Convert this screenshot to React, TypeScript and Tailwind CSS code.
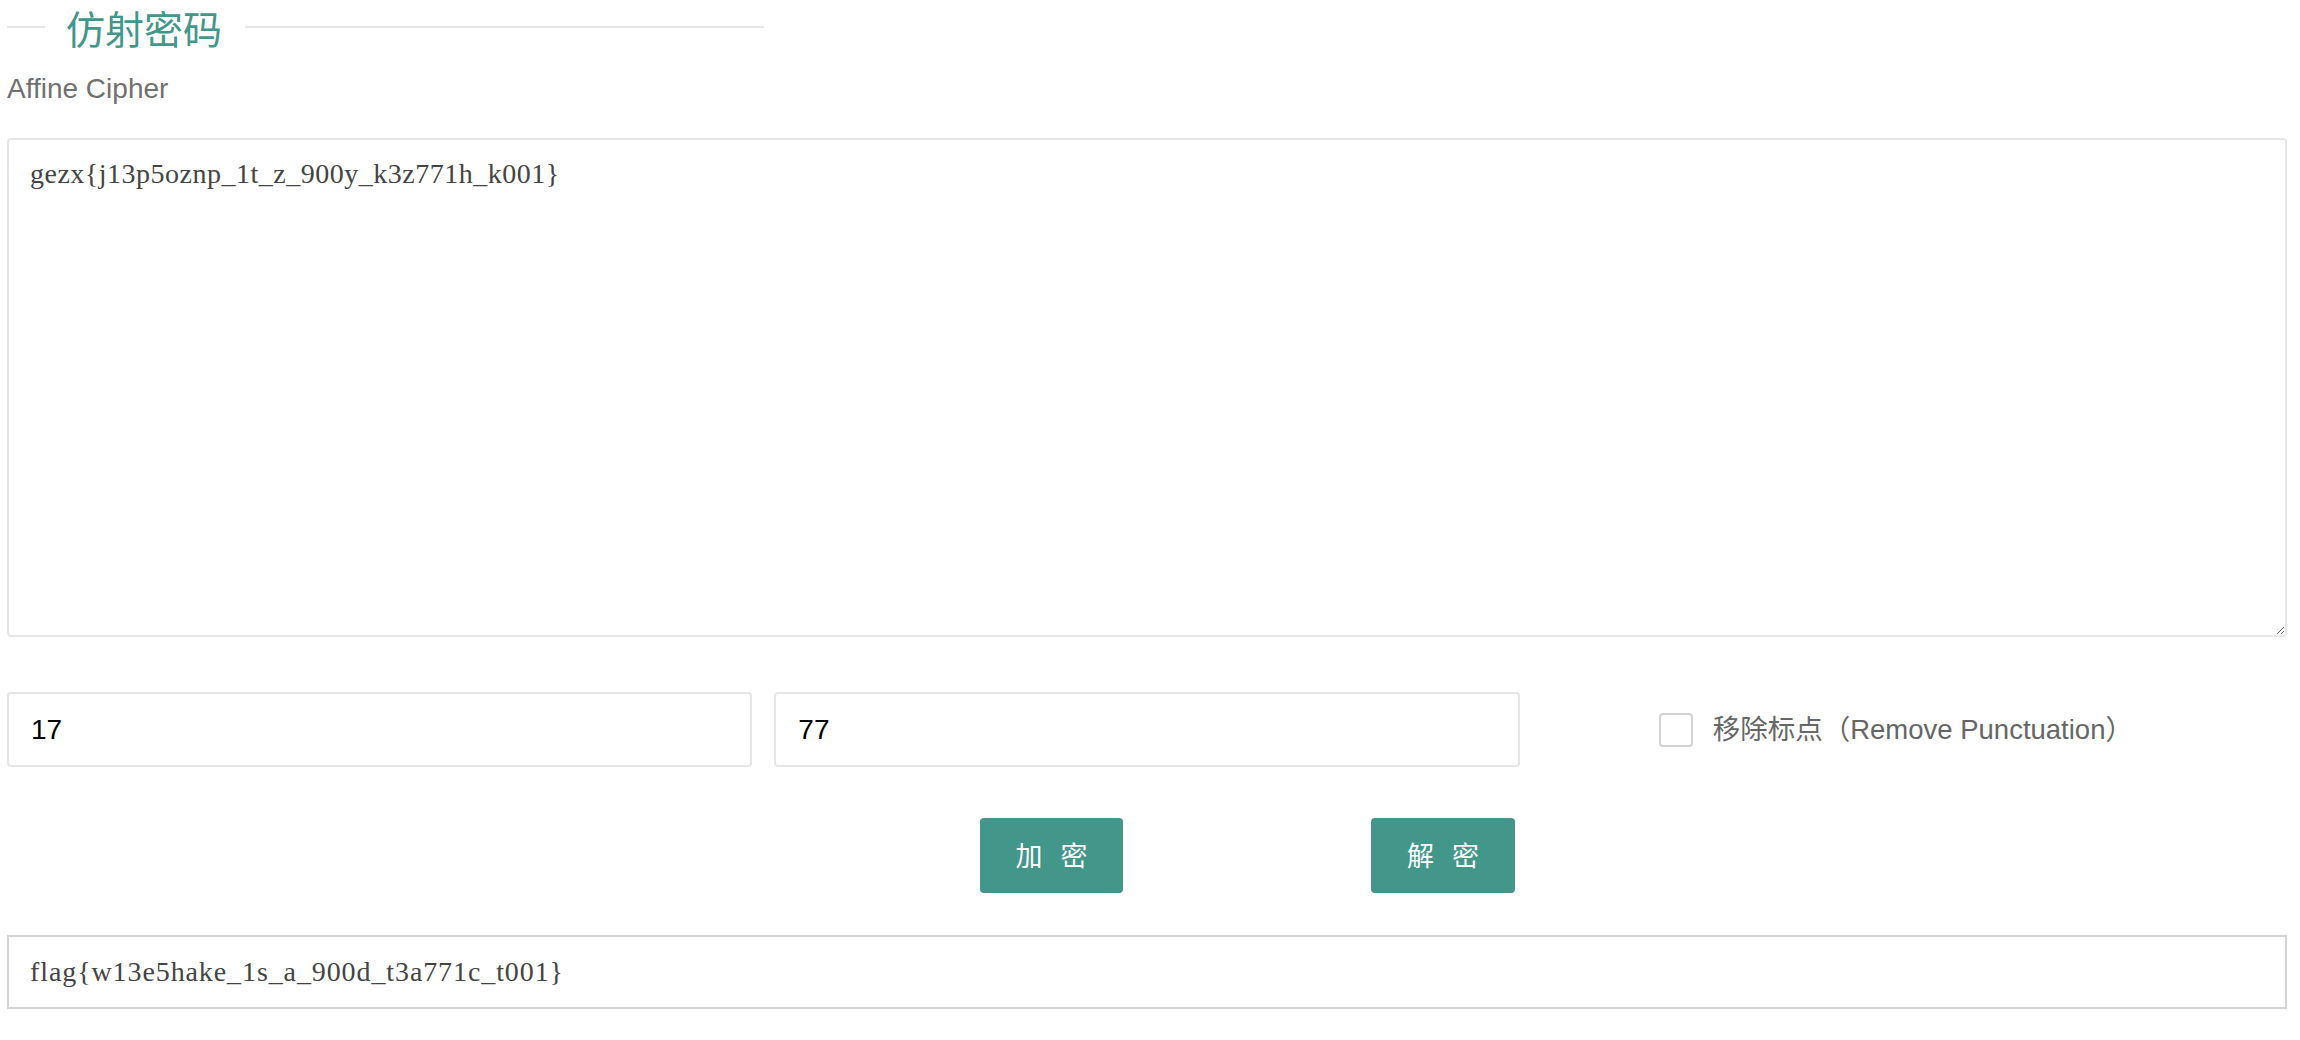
import React from "react";

const App = () => {
    return (
        <div className="min-h-screen bg-white pl-[7px] pr-[13px] font-['Liberation_Sans','Noto_Sans_CJK_SC',sans-serif]">
            {/* 标题 */}
            <div className="flex items-center h-[54px]">
                <div className="w-[38px] h-[2px] bg-[#e6e6e6]" />
                <h1 className="ml-[21px] mr-[23px] text-[39px] leading-[54px] text-[#42968a] font-['Noto_Sans_CJK_SC',sans-serif]">
                    仿射密码
                </h1>
                <div className="w-[519px] h-[2px] bg-[#e6e6e6]" />
            </div>
            <p className="mt-[15px] text-[28px] leading-[40px] text-[#707070]">Affine Cipher</p>

            {/* 输入区 */}
            <textarea
                className="mt-[29px] block w-full h-[499px] border-2 border-[#e6e6e6] rounded-[4px] pt-[13px] pl-[21px] text-[28px] leading-[42px] tracking-[0.5px] text-[#444] font-['Liberation_Serif',serif] focus:outline-none"
                defaultValue="gezx{j13p5oznp_1t_z_900y_k3z771h_k001}"
            />

            <div className="mt-[55px] grid grid-cols-3 gap-[22px]">
                <input
                    type="text"
                    defaultValue="17"
                    className="h-[75px] border-2 border-[#e6e6e6] rounded-[4px] pl-[22px] text-[28px] text-black focus:outline-none"
                />
                <input
                    type="text"
                    defaultValue="77"
                    className="h-[75px] border-2 border-[#e6e6e6] rounded-[4px] pl-[22px] text-[28px] text-black focus:outline-none"
                />
                <label className="flex items-center pl-[117px]">
                    <input
                        type="checkbox"
                        className="appearance-none w-[34px] h-[34px] border-2 border-[#d2d2d2] rounded-[4px] bg-white"
                    />
                    <span className="ml-[20px] text-[27.5px] text-[#666]">移除标点（Remove Punctuation）</span>
                </label>
            </div>

            {/* 按钮 */}
            <div className="mt-[51px] flex pl-[973px] gap-[248px]">
                <button className="w-[143px] h-[75px] rounded-[4px] bg-[#42968a] text-white text-[27px] tracking-[6px] pl-[6px] font-['Noto_Sans_CJK_SC',sans-serif]">
                    加 密
                </button>
                <button className="w-[144px] h-[75px] rounded-[4px] bg-[#42968a] text-white text-[27px] tracking-[6px] pl-[6px] font-['Noto_Sans_CJK_SC',sans-serif]">
                    解 密
                </button>
            </div>

            {/* 结果 */}
            <div className="mt-[42px] h-[74px] border-2 border-[#d4d4d4] flex items-center pl-[21px] text-[28px] tracking-[0.9px] text-[#444] font-['Liberation_Serif',serif]">
                flag{"{"}w13e5hake_1s_a_900d_t3a771c_t001{"}"}
            </div>
        </div>
    );
};

export default App;
